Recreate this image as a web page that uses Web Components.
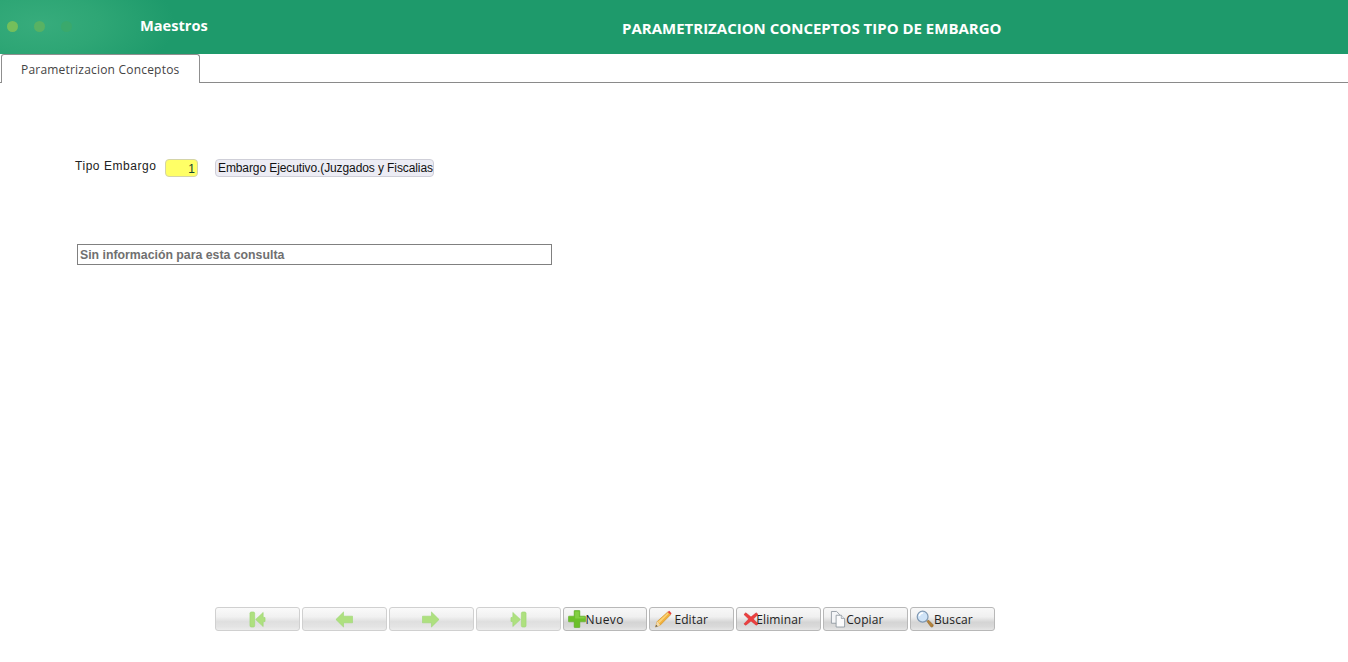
<!DOCTYPE html>
<html lang="es">
<head>
<meta charset="utf-8">
<title>Parametrizacion Conceptos</title>
<style>
html,body{margin:0;padding:0;height:100%;background:#fff;overflow:hidden}
body{display:flex;flex-direction:column;height:662px;font-family:"Liberation Sans",Arial,sans-serif}
</style>
</head>
<body>
<app-header module="Maestros" heading="PARAMETRIZACION CONCEPTOS TIPO DE EMBARGO"></app-header>
<tab-strip label="Parametrizacion Conceptos"></tab-strip>
<main-panel>
  <type-row label="Tipo Embargo" code="1" description="Embargo Ejecutivo.(Juzgados y Fiscalias"></type-row>
  <info-box>Sin información para esta consulta</info-box>
</main-panel>
<tool-bar>
  <tool-button icon="first" disabled></tool-button>
  <tool-button icon="prev" disabled></tool-button>
  <tool-button icon="next" disabled></tool-button>
  <tool-button icon="last" disabled></tool-button>
  <tool-button icon="add">Nuevo</tool-button>
  <tool-button icon="edit">Editar</tool-button>
  <tool-button icon="del">Eliminar</tool-button>
  <tool-button icon="copy">Copiar</tool-button>
  <tool-button icon="find">Buscar</tool-button>
</tool-bar>
<script>
function def(name, css, html){
  customElements.define(name, class extends HTMLElement{
    constructor(){super();this.attachShadow({mode:'open'});}
    connectedCallback(){
      const a=n=>this.getAttribute(n)||'';
      this.shadowRoot.innerHTML='<style>'+css+'</style>'+html(a,this);
    }
  });
}
def('app-header',`
:host{display:flex;align-items:center;height:54px;flex:none;
 background:radial-gradient(ellipse 135px 62px at 40px 24px,#37ac7c 0%,#2ea675 45%,#1e9a6b 100%);
 font-family:"Open Sans",sans-serif;font-weight:700;color:#fff}
.dots{display:flex;gap:16px;width:140px;padding:0 0 2px 7px;box-sizing:border-box;flex:none}
.dots i{width:11px;height:11px;border-radius:50%;display:block}
.m{font-size:14.6px;width:68px;flex:none;padding-bottom:4px;white-space:nowrap}
.h{font-size:15px;margin-left:414px;white-space:nowrap;padding-top:1px}
`,a=>`<div class="dots"><i style="background:#74bf5b"></i><i style="background:#58b263"></i><i style="background:#3aa96c"></i></div>
<div class="m">${a('module')}</div><div class="h">${a('heading')}</div>`);
def('tab-strip',`
:host{display:flex;height:29px;flex:none;box-sizing:border-box;border-bottom:1px solid #8a8a8a;align-items:flex-start;padding-left:1px}
.t{box-sizing:border-box;width:199px;height:29px;background:#fff;border:1px solid #8f8f8f;border-bottom:0;border-radius:3px 3px 0 0;
 font:12px "Open Sans",sans-serif;letter-spacing:.2px;color:#444;padding:6px 0 0 19px;white-space:nowrap}
`,a=>`<div class="t">${a('label')}</div>`);
def('main-panel',`
:host{display:block;flex:1;padding:76px 0 0 75px;min-height:0}
`,()=>`<slot></slot>`);
def('type-row',`
:host{display:flex;align-items:flex-start;height:18px;font-family:"Liberation Sans",Arial,sans-serif;font-size:12px}
.l{width:90px;flex:none;color:#222;letter-spacing:.55px;white-space:nowrap;line-height:14px}
.c{box-sizing:border-box;width:33px;height:18px;flex:none;background:#ffff66;border:1px solid #d4d4a8;border-radius:4px;text-align:right;padding:2px 2px 0 0;line-height:14px;color:#143;margin-right:17px}
.d{box-sizing:border-box;width:219px;height:18px;flex:none;background:#ececf4;border:1px solid #cfcfd8;border-radius:4px;padding:1px 0 0 2px;line-height:14px;color:#111;white-space:nowrap;letter-spacing:-.1px}
`,a=>`<div class="l">${a('label')}</div><div class="c">${a('code')}</div><div class="d">${a('description')}</div>`);
def('info-box',`
:host{display:block;box-sizing:border-box;width:475px;height:21px;margin:67px 0 0 2px;border:1px solid #808080;padding:3px 0 0 2px;
 font:bold 12.3px/15px "Liberation Sans",Arial,sans-serif;color:#707070}
`,()=>`<slot></slot>`);
def('tool-bar',`
:host{display:flex;flex:none;gap:2px;padding:0 0 31px 215px;height:24px}
`,()=>`<slot></slot>`);
const grn='#aee07f', grs='#9ad670';
const icons={
 first:`<svg width="17" height="17" viewBox="0 0 18 18" preserveAspectRatio="none"><rect x="1" y="1" width="5" height="16" rx="1.5" fill="${grn}" stroke="${grs}" stroke-width=".6"/><path d="M7 9 15 1.5V6.5L17 7V11L15 11.5V16.5Z" fill="${grn}" stroke="${grs}" stroke-width=".6"/></svg>`,
 prev:`<svg width="18" height="17" viewBox="0 0 19 18" preserveAspectRatio="none"><path d="M1 9 9 1V5.500H18.500V12.500H9V17Z" fill="${grn}" stroke="${grs}" stroke-width=".6" stroke-linejoin="round"/></svg>`,
 next:`<svg width="18" height="17" viewBox="0 0 19 18" preserveAspectRatio="none"><path d="M18 9 10 1V5.500H.5V12.500H10V17Z" fill="${grn}" stroke="${grs}" stroke-width=".6" stroke-linejoin="round"/></svg>`,
 last:`<svg width="17" height="17" viewBox="0 0 18 18" preserveAspectRatio="none"><rect x="12" y="1" width="5" height="16" rx="1.500" fill="${grn}" stroke="${grs}" stroke-width=".6"/><path d="M11 9 3 1.500V6.500L1 7V11L3 11.500V16.500Z" fill="${grn}" stroke="${grs}" stroke-width=".6"/></svg>`,
 add:`<svg width="18" height="18" viewBox="0 0 19 19"><path d="M7 .5H12Q12.500 .5 12.500 1V6.500H18Q18.500 6.500 18.500 7V12Q18.500 12.500 18 12.500H12.500V18Q12.500 18.500 12 18.500H7Q6.500 18.500 6.500 18V12.500H1Q.5 12.500 .5 12V7Q.5 6.500 1 6.500H6.500V1Q6.500 .5 7 .5Z" fill="#6cc02a" stroke="#5aa822" stroke-width=".6"/><path d="M7.500 1.500H11.500V7.500H17.500V9H7.500Z" fill="#8ed54e" opacity=".7"/></svg>`,
 edit:`<svg width="19" height="18" viewBox="0 0 19 19"><path d="M1 18 3 12 14 2 17 5 6 16Z" fill="#f2b13c" stroke="#c98a24" stroke-width=".6"/><path d="M1 18 3 12 6 16Z" fill="#f3dcae"/><path d="M1 18 1.800 15.600 3.400 17.200Z" fill="#555"/><path d="M3.500 12.500 14 3 15 4 5 14Z" fill="#fad37a"/><path d="M14 2 15.500 .8 18 3.300 17 5Z" fill="#e8413c"/></svg>`,
 del:`<svg width="16" height="14" viewBox="0 0 17 17" preserveAspectRatio="none"><path d="M1 3 3 1 8.500 6 14 1 16 3 11 8.500 16 14.500 14 16 8.500 11 3 16 1 14.500 6 8.500Z" fill="#ec3f3f" stroke="#d02c2c" stroke-width=".6" stroke-linejoin="round"/></svg>`,
 copy:`<svg width="16" height="18" viewBox="0 0 17 19"><path d="M1.500 1.500H7L10 4.500V14H1.500Z" fill="#f4f5f7" stroke="#8d959e" stroke-width=".9"/><path d="M6.500 5.500H12L15.500 9V18H6.500Z" fill="#fbfbfc" stroke="#8d959e" stroke-width=".9"/><path d="M12 5.500V9H15.500" fill="#dfe3e8" stroke="#8d959e" stroke-width=".7"/></svg>`,
 find:`<svg width="18" height="18" viewBox="0 0 19 19"><path d="M11.500 12 13 10.500 18 15.500Q18.500 17 17.500 17.800 16.200 18.300 15.500 17.500Z" fill="#b5833a" stroke="#8a5f24" stroke-width=".6"/><circle cx="7" cy="7" r="5.700" fill="#cfe3f7" stroke="#7f98b2" stroke-width="1.300"/><path d="M3.500 6.500A3.800 3.800 0 0 1 7.500 3.200" fill="none" stroke="#fff" stroke-width="1.400"/></svg>`
};
def('tool-button',`
:host{display:flex;box-sizing:border-box;width:84.875px;height:24px;align-items:center;flex:none;
 border:1px solid #b8b8b8;border-radius:3px;
 background:linear-gradient(#f8f8f8 0%,#f0f0f0 40%,#d4d4d4 65%,#dadada 85%,#e6e6e6 100%);
 font:12px "Open Sans",sans-serif;letter-spacing:.12px;color:#222;white-space:nowrap;padding-left:4px}
:host([disabled]){justify-content:center;padding-left:0;border-color:#d0d0d0;
 background:linear-gradient(#fafafa 0%,#f1f1f1 40%,#dfdfdf 62%,#e4e4e4 85%,#ececec 100%)}
:host([icon=del]){padding-left:6px}
:host([icon=copy]){padding-left:6px}
:host([icon=find]){padding-left:5px}
svg{display:block;flex:none}
:host([icon=add]) span{letter-spacing:.4px}
:host([icon=edit]) span{margin-left:1px}
:host([icon=del]) span{margin-left:-3px}
`,(a)=>`${icons[a('icon')]}<span><slot></slot></span>`);
</script>
</body>
</html>
